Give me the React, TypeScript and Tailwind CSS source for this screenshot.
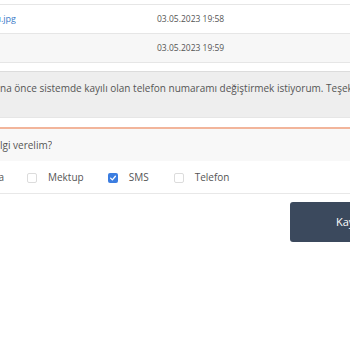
import React from "react";

const font = { fontFamily: '"Open Sans", "Noto Sans", sans-serif' };

function Check({ checked }: { checked?: boolean }) {
  if (checked) {
    return (
      <span className="flex h-[10px] w-[10px] items-center justify-center rounded-[2px] bg-[#3b7de0]">
        <svg width="8" height="8" viewBox="0 0 10 10">
          <path d="M2 5.2 L4.2 7.4 L8 2.8" fill="none" stroke="white" strokeWidth="1.6" strokeLinecap="round" strokeLinejoin="round" />
        </svg>
      </span>
    );
  }
  return <span className="h-[10px] w-[10px] rounded-[2px] border border-[#dcdcdc] bg-white" />;
}

export default function App() {
  return (
    <div className="h-[350px] w-[350px] overflow-hidden bg-white text-[#555]" style={font}>
      <div className="h-[4px]" />
      <div className="border-t border-[#e6e6e6]">
        <div className="flex h-[28px] items-center bg-white">
          <div className="flex w-[16px] justify-end overflow-hidden whitespace-nowrap text-[9px] text-[#3d7cc9]">
            ekran_goruntusu.jpg
          </div>
          <div className="ml-[141px] text-[8.5px] text-[#555]">03.05.2023 19:58</div>
        </div>
        <div className="flex h-[29px] items-center border-t border-[#e6e6e6] bg-[#f7f7f7]">
          <div className="ml-[157px] text-[8.5px] text-[#555]">03.05.2023 19:59</div>
        </div>
        <div className="border-t border-[#e6e6e6]" />
      </div>
      <div className="h-[8px]" />
      <div className="h-[47px] border-t border-[#dcdcdc] border-b border-b-[#e6e6e6] bg-[#eeeeee] pt-[9px]">
        <div className="whitespace-nowrap text-[10px] leading-[14px] text-[#555]">
          na önce sistemde kayılı olan telefon numaramı değiştirmek istiyorum. Teşekkür ederim.
        </div>
      </div>
      <div className="h-[9px]" />
      <div className="h-[2px] bg-[#f2b59b]" />
      <div className="flex h-[32px] items-center bg-[#f8f8f8]">
        <div className="flex w-[52px] justify-end overflow-hidden whitespace-nowrap text-[10px] text-[#555]">
          Size hangi kanaldan bilgi verelim?
        </div>
      </div>
      <div className="flex h-[33px] items-center border-b border-[#e8e8e8] pt-[1px] text-[10px] text-[#555]">
        <div className="flex w-[4px] justify-end overflow-hidden whitespace-nowrap">E-Posta</div>
        <div className="ml-[23px] flex items-center">
          <Check />
          <span className="ml-[11px]">Mektup</span>
        </div>
        <div className="ml-[24px] flex items-center">
          <Check checked />
          <span className="ml-[11px]">SMS</span>
        </div>
        <div className="ml-[25px] flex items-center">
          <Check />
          <span className="ml-[11px]">Telefon</span>
        </div>
      </div>
      <div className="flex justify-end pt-[8px]">
        <button className="flex h-[40px] w-[100px] -mr-[40px] items-center rounded-[3px] bg-[#3b495d] pl-[46px] text-[11px] text-white">
          Kaydet
        </button>
      </div>
    </div>
  );
}
